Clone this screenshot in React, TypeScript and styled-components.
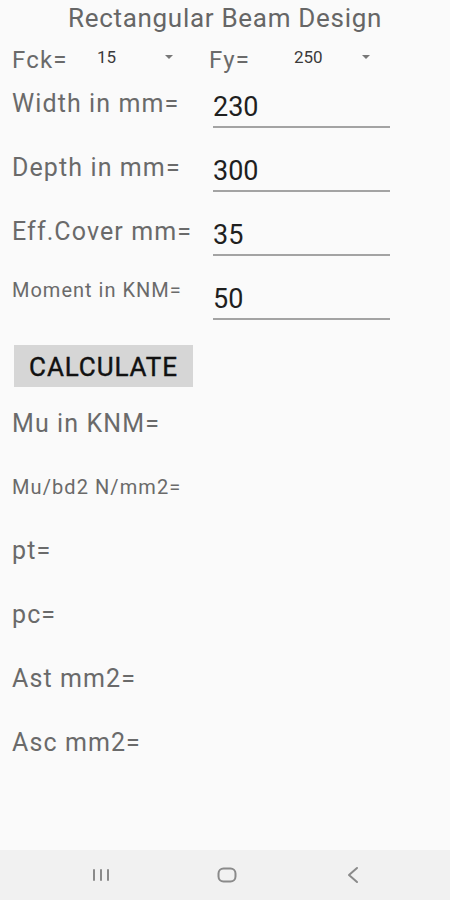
import React from "react";
import styled, { createGlobalStyle } from "styled-components";

const Global = createGlobalStyle`
  html, body { margin: 0; padding: 0; background: #fafafa; }
  body { font-family: Roboto, "Noto Sans", sans-serif; }
`;

const Page = styled.div`
  width: 450px;
  height: 900px;
  display: flex;
  flex-direction: column;
  background: #fafafa;
  overflow: hidden;
`;

const Content = styled.div`
  flex: 1;
  padding: 0 12px;
  display: flex;
  flex-direction: column;
`;

const Title = styled.h1`
  margin: 0;
  height: 37px;
  font-size: 26px;
  line-height: 37px;
  font-weight: 400;
  letter-spacing: 0.7px;
  color: #666666;
  text-align: center;
`;

const SpinnerRow = styled.div`
  height: 44px;
  display: flex;
  align-items: center;
`;

const SpinnerLabel = styled.span`
  width: 85px;
  margin-top: 2px;
  font-size: 24px;
  line-height: 44px;
  letter-spacing: 1.2px;
  color: #6a6a6a;
`;

const Spinner = styled.div`
  width: 80px;
  margin-right: 32px;
  display: flex;
  align-items: center;
  justify-content: space-between;
  padding-bottom: 4px;
`;

const SpinnerValue = styled.span`
  font-size: 17px;
  line-height: 20px;
  color: #3a3a3a;
`;

const Caret = styled.span`
  width: 0;
  height: 0;
  margin-right: 4px;
  border-left: 4.5px solid transparent;
  border-right: 4.5px solid transparent;
  border-top: 4.5px solid #777777;
`;

const InputRow = styled.div`
  height: 64px;
  display: flex;
  align-items: flex-start;
`;

const InputLabel = styled.span<{ $small?: boolean }>`
  width: 201px;
  margin-top: ${(p) => (p.$small ? "0" : "6px")};
  font-size: ${(p) => (p.$small ? "20px" : "25px")};
  line-height: 34px;
  letter-spacing: ${(p) => (p.$small ? "1px" : "1.1px")};
  color: #6a6a6a;
  white-space: nowrap;
`;

const Field = styled.div`
  width: 177px;
  margin-top: 9px;
  padding-bottom: 2px;
  border-bottom: 2px solid #a3a3a3;
`;

const FieldValue = styled.div`
  font-size: 27px;
  line-height: 34px;
  color: #1f1f1f;
`;

const Button = styled.button`
  align-self: flex-start;
  margin: 8px 0 0 2px;
  width: 179px;
  height: 42px;
  padding: 2px 0 0;
  border: none;
  border-radius: 0;
  background: #d6d6d6;
  font-family: Roboto, "Noto Sans", sans-serif;
  font-size: 26px;
  font-weight: 400;
  -webkit-text-stroke: 0.4px #111111;
  letter-spacing: 0.9px;
  color: #111111;
`;

const ResultRow = styled.div<{ $small?: boolean }>`
  height: 64px;
  font-size: ${(p) => (p.$small ? "20px" : "25px")};
  line-height: 64px;
  letter-spacing: ${(p) => (p.$small ? "1.08px" : "1.1px")};
  color: #6a6a6a;
  white-space: nowrap;
`;

const FirstResult = styled(ResultRow)`
  margin-top: 5px;
  height: 63px;
`;

const NavBar = styled.div`
  height: 50px;
  background: #f1f1f1;
  display: flex;
  align-items: center;
  justify-content: center;
  gap: 102px;
  padding-left: 3px;
`;

const NavIcon = styled.svg`
  width: 24px;
  height: 24px;
  display: block;
`;

const inputs = [
  { label: "Width in mm=", value: "230" },
  { label: "Depth in mm=", value: "300" },
  { label: "Eff.Cover mm=", value: "35" },
  { label: "Moment in KNM=", value: "50", small: true },
];

export default function App() {
  return (
    <Page>
      <Global />
      <Content>
        <Title>Rectangular Beam Design</Title>
        <SpinnerRow>
          <SpinnerLabel>Fck=</SpinnerLabel>
          <Spinner>
            <SpinnerValue>15</SpinnerValue>
            <Caret />
          </Spinner>
          <SpinnerLabel>Fy=</SpinnerLabel>
          <Spinner>
            <SpinnerValue>250</SpinnerValue>
            <Caret />
          </Spinner>
        </SpinnerRow>
        {inputs.map((r) => (
          <InputRow key={r.label}>
            <InputLabel $small={r.small}>{r.label}</InputLabel>
            <Field>
              <FieldValue>{r.value}</FieldValue>
            </Field>
          </InputRow>
        ))}
        <Button>CALCULATE</Button>
        <FirstResult>Mu in KNM=</FirstResult>
        <ResultRow $small>Mu/bd2 N/mm2=</ResultRow>
        <ResultRow>pt=</ResultRow>
        <ResultRow>pc=</ResultRow>
        <ResultRow>Ast mm2=</ResultRow>
        <ResultRow>Asc mm2=</ResultRow>
      </Content>
      <NavBar>
        <NavIcon viewBox="0 0 24 24">
          <g stroke="#8a8a8a" strokeWidth="2" strokeLinecap="round">
            <line x1="5" y1="7" x2="5" y2="17" />
            <line x1="12" y1="7" x2="12" y2="17" />
            <line x1="19" y1="7" x2="19" y2="17" />
          </g>
        </NavIcon>
        <NavIcon viewBox="0 0 24 24">
          <rect x="3.5" y="5.5" width="17" height="13" rx="5" fill="none" stroke="#8a8a8a" strokeWidth="2" />
        </NavIcon>
        <NavIcon viewBox="0 0 24 24">
          <polyline points="16,5 8,12 16,19" fill="none" stroke="#8a8a8a" strokeWidth="2" strokeLinecap="round" strokeLinejoin="round" />
        </NavIcon>
      </NavBar>
    </Page>
  );
}
